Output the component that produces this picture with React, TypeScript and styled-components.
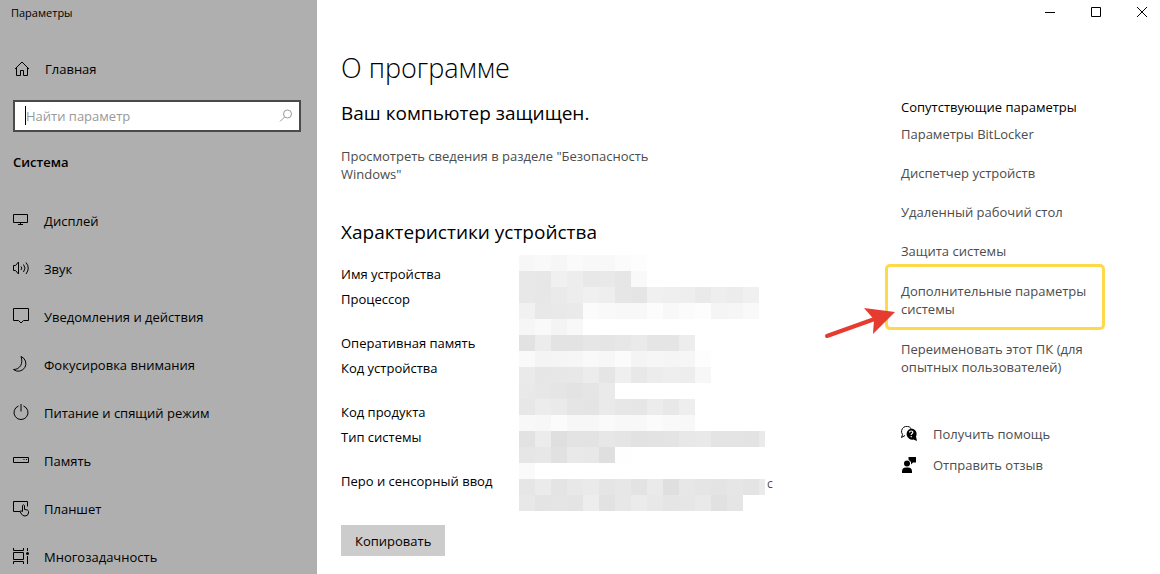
import React from "react";
import styled, { createGlobalStyle, css } from "styled-components";

const GlobalStyle = createGlobalStyle`
  *, *::before, *::after { box-sizing: border-box; }
  body {
    margin: 0;
    background: #ffffff;
    color: #000000;
    font-family: "Open Sans", "Noto Sans", sans-serif;
    font-size: 13px;
    line-height: 18px;
  }
  h1, h2, h3, p, ul { margin: 0; padding: 0; }
  ul { list-style: none; }
  a { color: inherit; text-decoration: none; }
  button { font: inherit; color: inherit; border: 0; padding: 0; }
  svg { display: block; flex: none; }
`;

const Shell = styled.div`
  display: flex;
  height: 100vh;
  min-height: 400px;
  overflow: hidden;
`;

const Sidebar = styled.aside`
  flex: 0 0 317px;
  background: #afafaf;
  overflow: hidden;
`;

const AppTitle = styled.div`
  padding: 4px 11px 0;
  font-size: 11px;
`;

const HomeLink = styled.a`
  display: flex;
  align-items: center;
  gap: 15px;
  height: 24px;
  margin: 35px 14px 19px;
`;

const SearchBox = styled.label`
  display: flex;
  align-items: center;
  height: 32px;
  margin: 0 16px 0 13px;
  padding: 0 6px 0 10px;
  border: 2px solid #4a4a4a;
  background: #ffffff;
  color: #999999;
`;

const Caret = styled.span`
  width: 1px;
  height: 19px;
  margin-bottom: 2px;
  background: #000000;
`;

const SearchInput = styled.input`
  flex: 1;
  min-width: 0;
  padding: 0;
  border: 0;
  outline: 0;
  background: transparent;
  font: inherit;
  color: #000000;
  &::placeholder { color: #999999; opacity: 1; }
`;

const SectionTitle = styled.h2`
  margin: 21px 13px 26px;
  font-size: 13px;
  line-height: 18px;
  font-weight: 600;
`;

const NavItem = styled.a`
  display: flex;
  align-items: center;
  gap: 14px;
  height: 48px;
  padding: 0 12px;
`;

const Main = styled.main`
  flex: 1;
  min-width: 0;
  display: flex;
  flex-direction: column;
`;

const TitleBar = styled.header`
  display: flex;
  justify-content: flex-end;
  gap: 10px;
  height: 24px;
`;

const WindowButton = styled.button`
  display: grid;
  place-items: center;
  width: 36px;
  background: transparent;
`;

const Columns = styled.div`
  display: flex;
  padding: 26px 0 0 24px;
`;

const Content = styled.section`
  flex: 1;
  min-width: 0;
`;

const PageTitle = styled.h1`
  margin-bottom: 14px;
  font-size: 27px;
  line-height: 36px;
  font-weight: 300;
`;

const Subtitle = styled.h2`
  font-size: 19px;
  line-height: 26px;
  font-weight: 400;
`;

const SecurityLink = styled.a`
  display: block;
  max-width: 340px;
  margin: 21px 0 36px;
  color: #4c4c4c;
`;

const Specs = styled.div`
  display: flex;
  margin-top: 10px;
`;

const SpecList = styled.ul`
  flex: 0 0 178px;
  padding-top: 10px;
`;

const SpecLabel = styled.li<{ $tall?: boolean }>`
  height: ${(p) => (p.$tall ? 44 : 25)}px;
`;

const Trailing = styled.span`
  align-self: flex-end;
  margin: 0 0 18px 2px;
  font-size: 12px;
  color: #4c4c4c;
`;

const CopyButton = styled.button`
  height: 31px;
  margin-top: 14px;
  padding: 0 14px;
  background: #cccccc;
`;

const Related = styled.aside`
  flex: 0 0 259px;
  padding: 48px 41px 0 0;
`;

const RelatedTitle = styled.h3`
  margin-bottom: 9px;
  font-size: 13px;
  line-height: 18px;
  font-weight: 400;
`;

const RelatedLink = styled.a<{ $marked?: boolean }>`
  display: block;
  margin-bottom: 21px;
  color: #4c4c4c;
  ${(p) =>
    p.$marked &&
    css`
      position: relative;
      margin: -17px 14px 10px -16px;
      padding: 15px 12px 9px 13px;
      border: 3px solid #ffd94a;
      border-radius: 5px;
    `}
`;

const Pointer = styled.svg`
  position: absolute;
  left: -64px;
  top: 36px;
`;

const HelpLinks = styled.div`
  display: grid;
  gap: 13px;
  margin-top: 49px;
`;

const HelpLink = styled.a`
  display: flex;
  align-items: center;
  gap: 16px;
  color: #4c4c4c;
`;

type IconProps = { children: React.ReactNode; size?: number };

const LineIcon = ({ children, size = 18 }: IconProps) => (
  <svg
    width={size}
    height={size}
    viewBox={`0 0 ${size} ${size}`}
    fill="none"
    stroke="#000"
    strokeWidth="1"
    aria-hidden="true"
  >
    {children}
  </svg>
);

const navItems: { label: string; icon: React.ReactNode }[] = [
  {
    label: "Дисплей",
    icon: <path d="M1.5 2.5h14v8h-14zM8.5 10.5v2M6 12.5h5" />,
  },
  {
    label: "Звук",
    icon: (
      <path d="M1.5 5.5h2l3-3.500v12l-3-3.500h-2zM9 6.500q1.500 1.500 0 3.500M11.500 4.500q3 3.500 0 7.500M14 2.500q4.500 5.500 0 11.500" />
    ),
  },
  {
    label: "Уведомления и действия",
    icon: <path d="M1.5 .5h15v12h-5l-2.500 2.500-2.500-2.500h-5z" />,
  },
  {
    label: "Фокусировка внимания",
    icon: <path d="M9 .5a7.600 7.600 0 1 1-7.500 13C8 13.500 11.500 7.500 9 .5z" />,
  },
  {
    label: "Питание и спящий режим",
    icon: <path d="M6.500 2a7 7 0 1 0 5 0M9 0v7.500" />,
  },
  {
    label: "Память",
    icon: <path d="M1.500 5.500h15v5h-15zM11.500 7.500h1M14 7.500h1" />,
  },
  {
    label: "Планшет",
    icon: (
      <path d="M8 11.500H1.500v-10h14v5M10.500 11.500V5.500q1-1.500 2 0V9.500l3 .5q1 .5 1 1.500v1.500q-.5 3-3.500 3-2.500 0-3.500-2l-1.500-2.500q.5-1.500 2.500 0" />
    ),
  },
  {
    label: "Многозадачность",
    icon: (
      <>
        <path d="M1.500 0v2.500h10V0M1.500 4.500h10v7h-10zM1.500 16v-2.500h10V16M15.500 0v3M15.500 8v8" />
        <circle cx="15.500" cy="5.500" r="1.500" fill="#000" stroke="none" />
      </>
    ),
  },
];

const specs = [
  { label: "Имя устройства" },
  { label: "Процессор", tall: true },
  { label: "Оперативная память" },
  { label: "Код устройства", tall: true },
  { label: "Код продукта" },
  { label: "Тип системы", tall: true },
  { label: "Перо и сенсорный ввод" },
];

/* Grey levels of the pixelated values, one hex byte per 16px tile */
const mosaicRows = [
  "f7 f9 f6 fa f8 f8 fb fd",
  "e8 e7 f0 ed e8 e9 e6 f9",
  "e8 e7 ea ed f0 ee e6 e5 f0 ef ee ea ee ec f0",
  "f1 e8 e9 ea fb f9 f8 f8 fc f8 fb fd f5 f6 f9",
  "f6 f9 f4 f8",
  "e2 ec e3 e3 e6 e5 e7 ea e5 e5 ed",
  "f9 f4 f5 f6 f9 f7 fb f4 f6 f5 f6 fd",
  "ea e6 e7 e8 ec e5 ef e8 ec ee ed f7",
  "e9 e7 e5 e3 e5 ea",
  "e7 ec ea e5 e4 ea e7 e6 ec e8 ee",
  "f8 f7 fb f7 f7 fa f8 f8 fb f9 f8",
  "e2 ec df e3 e3 e7 e5 e2 e3 e4 e8 e9 e4 e4 e3 ea",
  "e6 e7 e1 e9 e8 df fe",
  "fa",
  "e6 eb e4 e8 ea e5 e7 e3 ea df e7 e5 e4 e6 e4 ea",
  "e8 e4 e5 e4 ed e2 e7 eb e8 e5 e6 e9 e1 e5",
];

const Mosaic = () => (
  <svg width="246" height="256" shapeRendering="crispEdges" aria-hidden="true">
    {mosaicRows.map((row, y) =>
      row
        .split(" ")
        .map((g, x) => (
          <rect key={`${x}-${y}`} x={x * 16} y={y * 16} width="16" height="16" fill={`#${g}${g}${g}`} />
        ))
    )}
  </svg>
);

export default function App() {
  return (
    <>
      <GlobalStyle />
      <Shell>
        <Sidebar>
          <AppTitle>Параметры</AppTitle>
          <HomeLink href="#home">
            <LineIcon size={16}>
              <path d="M1 8l7-7 7 7M2.500 7v7.500h4v-5h3v5h4V7" />
            </LineIcon>
            Главная
          </HomeLink>
          <SearchBox>
            <Caret />
            <SearchInput type="text" placeholder="Найти параметр" aria-label="Найти параметр" />
            <svg width="14" height="14" viewBox="0 0 14 14" fill="none" stroke="currentColor" aria-hidden="true">
              <circle cx="8.500" cy="5" r="4" />
              <path d="M5.500 8L1 12.500" />
            </svg>
          </SearchBox>
          <SectionTitle>Система</SectionTitle>
          <nav>
            {navItems.map((item) => (
              <NavItem key={item.label} href="#section">
                <LineIcon>{item.icon}</LineIcon>
                {item.label}
              </NavItem>
            ))}
          </nav>
        </Sidebar>
        <Main>
          <TitleBar>
            <WindowButton aria-label="Свернуть">
              <svg width="10" height="10" stroke="#000" aria-hidden="true">
                <path d="M0 5.500h10" />
              </svg>
            </WindowButton>
            <WindowButton aria-label="Развернуть">
              <svg width="10" height="10" fill="none" stroke="#000" aria-hidden="true">
                <path d="M.5.5h9v9H.5z" />
              </svg>
            </WindowButton>
            <WindowButton aria-label="Закрыть">
              <svg width="10" height="10" stroke="#000" aria-hidden="true">
                <path d="M0 0l10 10M10 0L0 10" />
              </svg>
            </WindowButton>
          </TitleBar>
          <Columns>
            <Content>
              <PageTitle>О программе</PageTitle>
              <Subtitle>Ваш компьютер защищен.</Subtitle>
              <SecurityLink href="#security">
                Просмотреть сведения в разделе "Безопасность Windows"
              </SecurityLink>
              <Subtitle>Характеристики устройства</Subtitle>
              <Specs>
                <SpecList>
                  {specs.map((s) => (
                    <SpecLabel key={s.label} $tall={s.tall}>
                      {s.label}
                    </SpecLabel>
                  ))}
                </SpecList>
                <Mosaic />
                <Trailing>с</Trailing>
              </Specs>
              <CopyButton>Копировать</CopyButton>
            </Content>
            <Related>
              <RelatedTitle>Сопутствующие параметры</RelatedTitle>
              <RelatedLink href="#bitlocker">Параметры BitLocker</RelatedLink>
              <RelatedLink href="#devices">Диспетчер устройств</RelatedLink>
              <RelatedLink href="#remote">Удаленный рабочий стол</RelatedLink>
              <RelatedLink href="#protection">Защита системы</RelatedLink>
              <RelatedLink href="#advanced" $marked>
                Дополнительные параметры системы
                <Pointer width="74" height="38" viewBox="0 0 74 38" aria-hidden="true">
                  <path d="M3 33L52 15.500" stroke="#e63c30" strokeWidth="4" strokeLinecap="round" />
                  <path d="M40 5l31 4-22 22 1-14.500z" fill="#e63c30" />
                </Pointer>
              </RelatedLink>
              <RelatedLink href="#rename">Переименовать этот ПК (для опытных пользователей)</RelatedLink>
              <HelpLinks>
                <HelpLink href="#help">
                  <svg width="16" height="16" viewBox="0 0 16 16" aria-hidden="true">
                    <path d="M4 9.500L.5 11.500l1-3A5 5 0 1 1 10 2.500" fill="none" stroke="#000" />
                    <path d="M10 2.500a5.500 5.500 0 0 1 5 8l1 4.500-3.500-1.500A5.500 5.500 0 1 1 10 2.500z" fill="#000" />
                    <path d="M8.500 6.500q0-1.500 1.700-1.500t1.600 1.500c0 1.200-1.600 1-1.600 2.500M10.200 10v1.200" fill="none" stroke="#fff" strokeWidth="1.200" />
                  </svg>
                  Получить помощь
                </HelpLink>
                <HelpLink href="#feedback">
                  <svg width="16" height="16" viewBox="0 0 16 16" aria-hidden="true">
                    <circle cx="6" cy="6.500" r="3" />
                    <path d="M1 16v-1.500q0-4 4-4h2q4 0 4 4V16zM7.500 0H15v5.500h-3L10 7.500v-2.500L7.500 2.500z" />
                  </svg>
                  Отправить отзыв
                </HelpLink>
              </HelpLinks>
            </Related>
          </Columns>
        </Main>
      </Shell>
    </>
  );
}
